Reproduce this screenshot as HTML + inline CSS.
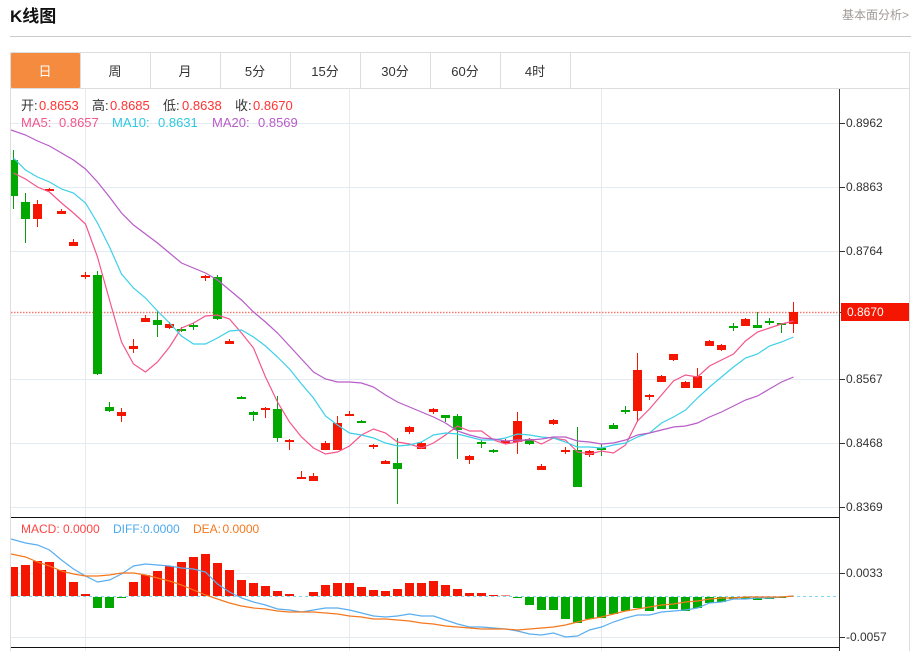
<!DOCTYPE html>
<html><head><meta charset="utf-8"><title>K线图</title>
<style>
html,body{margin:0;padding:0;background:#fff}
body{width:913px;height:651px;overflow:hidden;position:relative;font-family:"Liberation Sans","Noto Sans CJK SC",sans-serif}
svg{position:absolute;left:0;top:0}
text{font-family:"Liberation Sans","Noto Sans CJK SC",sans-serif}
</style></head><body>
<svg width="913" height="651" viewBox="0 0 913 651" xmlns="http://www.w3.org/2000/svg">
<defs><clipPath id="c"><rect x="11" y="89" width="828" height="562"/></clipPath></defs>
<text x="10" y="22" font-size="17" font-weight="bold" fill="#111">K线图</text>
<text x="842" y="19" font-size="12" fill="#a09a96">基本面分析&gt;</text>
<rect x="10" y="36" width="901" height="1" fill="#ccc"/>
<!-- tabs -->
<rect x="10.5" y="52.5" width="899" height="36" fill="#fff" stroke="#ddd"/>
<rect x="11" y="53" width="69" height="35" rx="1" fill="#f58b3e"/>
<path d="M80.5 53V88M150.5 53V88M220.5 53V88M290.5 53V88M360.5 53V88M430.5 53V88M500.5 53V88M570.5 53V88" stroke="#ddd" fill="none"/>
<g font-size="13" text-anchor="middle" fill="#333">
<text x="45" y="76" fill="#fff">日</text><text x="115" y="76">周</text><text x="185" y="76">月</text><text x="255" y="76">5分</text><text x="325" y="76">15分</text><text x="395" y="76">30分</text><text x="465" y="76">60分</text><text x="535" y="76">4时</text>
</g>
<!-- frame -->
<path d="M10.5 88V651" stroke="#ddd" fill="none"/>
<path d="M909.5 88V651" stroke="#ddd" fill="none"/>
<!-- grid -->
<path d="M11 123.5H839M11 187.5H839M11 251.5H839M11 315.5H839M11 379.5H839M11 443.5H839M11 507.5H839M11 573.5H839M11 637.5H839M85.5 89V651M349.5 89V651M601.5 89V651" stroke="#e3eaf2" fill="none"/>
<!-- price line -->
<path d="M11 312.5H839" stroke="#f4564a" stroke-width="1.4" stroke-dasharray="1.5 1.5" fill="none" opacity=".8"/>
<path d="M11 596.5H837" stroke="#7fd6ee" stroke-dasharray="3 3" fill="none"/>
<g clip-path="url(#c)">
<!-- red wicks -->
<path stroke="#f41600" fill="none" d="M37.5 200V227M49.5 188V191M61.5 209V214M73.5 239V246M85.5 272V279M121.5 408V422M133.5 339V353M145.5 315V322M169.5 322V329M205.5 275V281M229.5 339V344M265.5 407V418M289.5 439V450M301.5 471V479M313.5 473V481M325.5 441V450M337.5 416V450M349.5 411V416M373.5 444V449M385.5 460V464M409.5 426V434M421.5 442V449M433.5 408V414M469.5 455V464M505.5 439V444M517.5 412V454M541.5 464V470M553.5 419V425M565.5 447V454M589.5 450V457M637.5 353V422M649.5 394V400M661.5 375V382M673.5 354V361M685.5 381V388M697.5 368V388M709.5 340V346M721.5 344V351M745.5 318V326M793.5 302V333"/>
<!-- red bodies -->
<path stroke="#f41600" stroke-width="9" fill="none" d="M37.5 204V219M49.5 189V191M61.5 211V214M73.5 242V246M85.5 275V277M121.5 412V416M133.5 346V349M145.5 318V322M169.5 324V328M205.5 276V278M229.5 341V344M265.5 408V410M289.5 440V442M301.5 477V479M313.5 476V481M325.5 443V450M337.5 423V450M349.5 414V416M373.5 445V447M385.5 461V464M409.5 427V432M421.5 443V449M433.5 409V412M469.5 456V460M505.5 441V443M517.5 421V442M541.5 466V470M553.5 420V424M565.5 450V452M589.5 451V455M637.5 370V411M649.5 395V397M661.5 376V382M673.5 354V360M685.5 382V388M697.5 376V388M709.5 341V346M721.5 345V350M745.5 319V326M793.5 312V324"/>
<!-- green wicks -->
<path stroke="#0a9a10" fill="none" d="M13.5 150V209M25.5 193V243M97.5 271V375M109.5 402V412M157.5 311V337M181.5 327V332M193.5 323V330M217.5 275V320M241.5 396V399M253.5 411V421M277.5 396V442M361.5 420V423M397.5 438V504M445.5 415V422M457.5 414V459M481.5 440V448M493.5 449V453M529.5 438V445M577.5 427V487M601.5 444V456M613.5 423V429M625.5 406V414M733.5 323V331M757.5 312V328M769.5 318V325M781.5 323V333"/>
<!-- green bodies -->
<path stroke="#00a800" stroke-width="9" fill="none" d="M13.5 160V196M25.5 202V219M97.5 275V374M109.5 407V411M157.5 320V325M181.5 329V331M193.5 325V327M217.5 277V319M241.5 397V399M253.5 412V415M277.5 409V438M361.5 421V423M397.5 463V469M445.5 415V418M457.5 416V430M481.5 442V444M493.5 450V452M529.5 439V444M577.5 450V487M601.5 448V450M613.5 425V429M625.5 410V412M733.5 326V328M757.5 325V328M769.5 321V323M781.5 323V325"/>
<!-- MA lines -->
<polyline fill="none" stroke="#f4558c" stroke-width="1.2" points="13.5,173 25.5,179 37.5,187 49.5,192 61.5,203 73.5,213 85.5,224 97.5,257 109.5,300 121.5,342 133.5,364 145.5,372 157.5,362 169.5,347 181.5,328 193.5,323 205.5,316 217.5,315 229.5,319 241.5,333 253.5,348 265.5,377 277.5,402 289.5,422 301.5,437 313.5,448 325.5,454 337.5,452 349.5,446 361.5,435 373.5,429 385.5,433 397.5,442 409.5,444 421.5,448 433.5,443 445.5,435 457.5,426 469.5,431 481.5,431 493.5,440 505.5,444 517.5,442 529.5,439 541.5,444 553.5,438 565.5,440 577.5,452 589.5,454 601.5,451 613.5,453 625.5,445 637.5,421 649.5,409 661.5,395 673.5,381 685.5,375 697.5,377 709.5,366 721.5,360 733.5,354 745.5,341 757.5,332 769.5,328 781.5,324 793.5,321"/>
<polyline fill="none" stroke="#3cd0e8" stroke-width="1.2" points="13.5,158 25.5,170 37.5,177 49.5,182 61.5,189 73.5,193 85.5,203 97.5,223 109.5,247 121.5,274 133.5,288 145.5,298 157.5,311 169.5,323 181.5,336 193.5,344 205.5,344 217.5,338 229.5,331 241.5,330 253.5,337 265.5,346 277.5,357 289.5,369 301.5,384 313.5,398 325.5,416 337.5,425 349.5,433 361.5,435 373.5,438 385.5,443 397.5,446 409.5,445 421.5,442 433.5,435 445.5,433 457.5,434 469.5,437 481.5,440 493.5,440 505.5,438 517.5,434 529.5,435 541.5,437 553.5,438 565.5,442 577.5,447 589.5,447 601.5,448 613.5,445 625.5,443 637.5,437 649.5,433 661.5,423 673.5,417 685.5,410 697.5,398 709.5,387 721.5,377 733.5,367 745.5,358 757.5,354 769.5,346 781.5,342 793.5,337"/>
<polyline fill="none" stroke="#b85cc8" stroke-width="1.2" points="11,130 25.5,135 37.5,141 49.5,146 61.5,153 73.5,160 85.5,169 97.5,182 109.5,197 121.5,213 133.5,225 145.5,234 157.5,243 169.5,253 181.5,263 193.5,268 205.5,273 217.5,280 229.5,290 241.5,300 253.5,312 265.5,322 277.5,333 289.5,346 301.5,359 313.5,372 325.5,379 337.5,382 349.5,382 361.5,383 373.5,387 385.5,395 397.5,402 409.5,407 421.5,412 433.5,417 445.5,423 457.5,431 469.5,435 481.5,438 493.5,439 505.5,441 517.5,440 529.5,440 541.5,439 553.5,437 565.5,437 577.5,441 589.5,442 601.5,444 613.5,443 625.5,440 637.5,435 649.5,433 661.5,430 673.5,427 685.5,426 697.5,423 709.5,417 721.5,412 733.5,406 745.5,400 757.5,396 769.5,389 781.5,382 793.5,377"/>
<!-- MACD bars red -->
<path stroke="#f41600" stroke-width="9" fill="none" d="M13.5 567V596M25.5 565V596M37.5 561V596M49.5 562V596M61.5 570V596M73.5 582V596M85.5 594V596M133.5 582V596M145.5 575V596M157.5 571V596M169.5 566V596M181.5 562V596M193.5 557V596M205.5 554V596M217.5 563V596M229.5 570V596M241.5 580V596M253.5 583V596M265.5 586V596M277.5 591V596M289.5 594V596M313.5 592V596M325.5 585V596M337.5 583V596M349.5 583V596M361.5 587V596M373.5 590V596M385.5 591V596M397.5 589V596M409.5 583V596M421.5 583V596M433.5 581V596M445.5 585V596M457.5 589V596M469.5 593V596M481.5 593V596M493.5 595V596"/>
<path stroke="#f78a80" stroke-width="9" fill="none" d="M505.5 595V596"/>
<!-- MACD bars green -->
<path stroke="#00a800" stroke-width="9" fill="none" d="M97.5 597V608M109.5 597V608M121.5 597V598M517.5 597V598M529.5 597V605M541.5 597V610M553.5 597V610M565.5 597V619M577.5 597V623M589.5 597V619M601.5 597V618M613.5 597V614M625.5 597V611M637.5 597V608M649.5 597V611M661.5 597V609M673.5 597V609M685.5 597V611M697.5 597V608M709.5 597V603M721.5 597V602M733.5 597V599M745.5 597V599M757.5 597V600M769.5 597V599M781.5 597V598"/>
<!-- DIFF / DEA -->
<polyline fill="none" stroke="#5aaef0" stroke-width="1.2" points="11,539 25.5,543 37.5,545 49.5,550 61.5,560 73.5,569 85.5,576 97.5,582 109.5,580 121.5,574 133.5,566 145.5,564 157.5,565 169.5,566 181.5,568 193.5,569 205.5,572 217.5,584 229.5,592 241.5,598 253.5,602 265.5,605 277.5,609 289.5,610 301.5,612 313.5,610 325.5,608 337.5,608 349.5,610 361.5,613 373.5,616 385.5,617 397.5,616 409.5,614 421.5,616 433.5,616 445.5,620 457.5,624 469.5,627 481.5,627 493.5,628 505.5,629 517.5,631 529.5,634 541.5,635 553.5,633 565.5,637 577.5,636 589.5,630 601.5,627 613.5,622 625.5,618 637.5,615 649.5,615 661.5,612 673.5,611 685.5,610 697.5,608 709.5,603 721.5,602 733.5,599 745.5,599 757.5,598 769.5,598 781.5,597 793.5,596"/>
<polyline fill="none" stroke="#f5781e" stroke-width="1.2" points="11,554 25.5,557 37.5,562 49.5,566 61.5,571 73.5,574 85.5,576 97.5,576 109.5,575 121.5,573 133.5,573 145.5,575 157.5,578 169.5,581 181.5,585 193.5,590 205.5,595 217.5,599 229.5,603 241.5,606 253.5,608 265.5,609 277.5,611 289.5,612 301.5,612 313.5,612 325.5,613 337.5,614 349.5,616 361.5,617 373.5,619 385.5,619 397.5,620 409.5,621 421.5,623 433.5,624 445.5,626 457.5,627 469.5,628 481.5,629 493.5,629 505.5,629 517.5,630 529.5,629 541.5,628 553.5,627 565.5,625 577.5,622 589.5,619 601.5,617 613.5,614 625.5,611 637.5,609 649.5,607 661.5,605 673.5,604 685.5,602 697.5,601 709.5,599 721.5,598 733.5,598 745.5,597 757.5,597 769.5,597 781.5,597 793.5,596"/>
</g>
<!-- axes -->
<path d="M11 517.5H839M11 647.5H839" stroke="#111" fill="none"/>
<path d="M839.5 89V651" stroke="#333" fill="none"/>
<path d="M840 123.5H845M840 187.5H845M840 251.5H845M840 312.5H845M840 379.5H845M840 443.5H845M840 507.5H845M840 573.5H845M840 637.5H845" stroke="#333" fill="none"/>
<rect x="841" y="303" width="68" height="18" fill="#f41600"/>
<g font-size="12" fill="#333">
<text x="846" y="127">0.8962</text>
<text x="846" y="191">0.8863</text>
<text x="846" y="255">0.8764</text>
<text x="847" y="316" fill="#fff">0.8670</text>
<text x="846" y="383">0.8567</text>
<text x="846" y="447">0.8468</text>
<text x="846" y="511">0.8369</text>
<text x="846" y="577">0.0033</text>
<text x="846" y="641">-0.0057</text>
</g>
<!-- legends -->
<g font-size="13">
<text x="21" y="110" fill="#333">开:</text><text x="39" y="110" fill="#f33">0.8653</text>
<text x="92" y="110" fill="#333">高:</text><text x="110" y="110" fill="#f33">0.8685</text>
<text x="163" y="110" fill="#333">低:</text><text x="182" y="110" fill="#f33">0.8638</text>
<text x="235" y="110" fill="#333">收:</text><text x="253" y="110" fill="#f33">0.8670</text>
<text x="21" y="127" fill="#f4558c">MA5:</text><text x="59" y="127" fill="#f4558c">0.8657</text>
<text x="112" y="127" fill="#2fc8e0">MA10:</text><text x="158" y="127" fill="#2fc8e0">0.8631</text>
<text x="212" y="127" fill="#b85cc8">MA20:</text><text x="258" y="127" fill="#b85cc8">0.8569</text>
</g>
<g font-size="12">
<text x="21" y="533" fill="#f44">MACD:</text><text x="63" y="533" fill="#f44">0.0000</text>
<text x="113" y="533" fill="#4aa8f0">DIFF:</text><text x="143" y="533" fill="#4aa8f0">0.0000</text>
<text x="193" y="533" fill="#f5781e">DEA:</text><text x="222.5" y="533" fill="#f5781e">0.0000</text>
</g>
</svg>
</body></html>
